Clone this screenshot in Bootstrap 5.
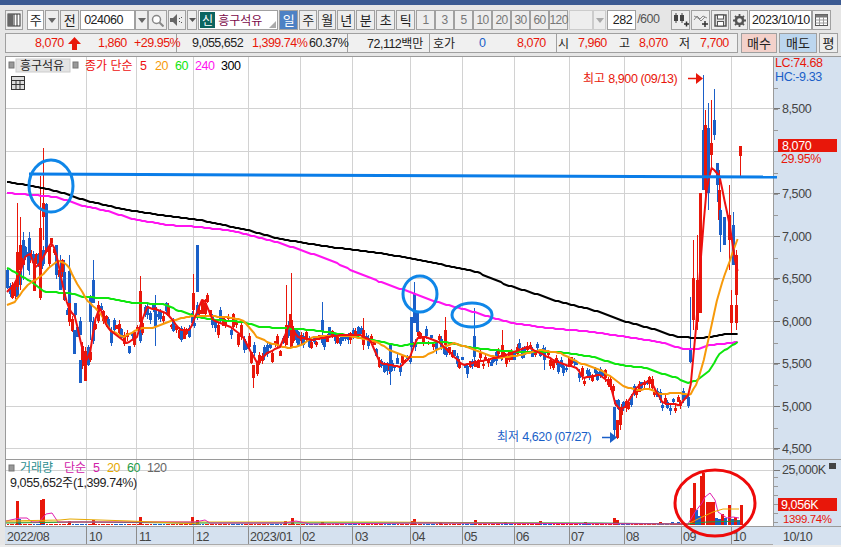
<!DOCTYPE html>
<html lang="ko">
<head>
<meta charset="utf-8">
<title>흥구석유 차트</title>
<link rel="stylesheet" href="https://cdn.jsdelivr.net/npm/bootstrap@5.3.0/dist/css/bootstrap.min.css">
<style>
html,body{height:547px;overflow:hidden;background:#e6e6e6;font-family:"Liberation Sans","Noto Sans CJK KR",sans-serif;color:#222;font-size:12.5px;letter-spacing:-.5px;line-height:18px}
.topbar{height:5px;background:#3b5a92}
.rowa{height:20px;margin:5px 0 0 5px}
.rowb{height:20px;margin:3px 0 3px 5px}
.tb{height:20px;padding:0;border:1px solid #a0a0a0;border-radius:0;background:#ededed;color:#222;font-size:13px;line-height:18px;font-family:"Noto Sans CJK KR",sans-serif;display:flex;align-items:center;justify-content:center;flex:none}
.tb.w14{width:14px}.tb.w18{width:18px}.tb.w19{width:19px}.tb.w36{width:36px}.tb.w38{width:38px}
.tb.wh{background:#fff}
.tb.on{background:#4d81c4;color:#fff}
.tb.off{color:#777;font-family:"Liberation Sans",sans-serif;font-size:12px;letter-spacing:-.6px}
.tb.buy{background:#f3d1ca}.tb.sell{background:#bcd6ee}
.gap1{gap:1px}
.fld{height:20px;border:1px solid #a0a0a0;background:#fff;padding:0 3px;flex:none;overflow:hidden;white-space:nowrap}
.codef{width:55px}.cnt{width:29px;text-align:right}.datef{width:63px;padding:0;text-align:center}
.namef{width:80px;padding:0 0 0 1px;position:relative;font-family:"Noto Sans CJK KR",sans-serif;font-size:12px;letter-spacing:0;color:#7a0a4a}
.shin{display:inline-block;width:15px;height:16px;background:#0c6460;color:#fff;text-align:center;line-height:15px;margin-right:3px}
.corner{position:absolute;right:1px;bottom:1px;width:0;height:0;border-left:7px solid transparent;border-bottom:7px solid #aaa}
.combo{width:24px;height:20px;background:#eee;border:1px solid #ccc;flex:none}
.quote{width:733px;height:20px;border:1px solid #a0a0a0;background:#f0f0f0;flex:none;white-space:nowrap;line-height:18px}
.seg{height:18px;flex:none;border-right:1px solid #a0a0a0;position:relative}
.seg1{width:171px}.seg2{width:171px}.seg3{width:82px}.seg4{width:127px}.seg5{flex:1;border-right:0}
.seg span{position:absolute;top:0}
.red{color:#e8170a}.blu{color:#1a5fc8}
.ko{font-family:"Noto Sans CJK KR",sans-serif;font-size:12px;letter-spacing:0}
.plain{color:#555;flex:none;width:27px;margin-left:1px}
svg text{font-family:"Liberation Sans","Noto Sans CJK KR",sans-serif;font-size:12.5px;letter-spacing:-.4px}
svg .k{font-family:"Noto Sans CJK KR",sans-serif;font-size:12px;letter-spacing:0}
svg .s{font-size:11.5px}
svg{display:block}
</style>
</head>
<body>
<div class="topbar"></div>
<div class="d-flex rowa gap1">
  <button class="btn tb w18"><svg width="14" height="14" viewBox="0 0 14 14"><rect x="1" y="1" width="12" height="12" fill="#fff" stroke="#333"/><rect x="1" y="1" width="5" height="12" fill="#666"/><path d="M7 1v12M10 1v12" stroke="#333"/></svg></button>
  <div class="d-flex ms-1 gap1"><button class="btn tb wh" style="width:17px">주</button><button class="btn tb w14"><svg width="8" height="5"><path d="M0 0h8L4 5z" fill="#666"/></svg></button></div>
  <button class="btn tb w19 ms-0">전</button>
  <div class="d-flex"><div class="fld codef">024060</div><button class="btn tb" style="width:13px;background:#eee"><svg width="8" height="5"><path d="M0 0h8L4 5z" fill="#666"/></svg></button><button class="btn tb w19 ms-0"><svg width="13" height="13" viewBox="0 0 13 13"><circle cx="5.5" cy="5.5" r="4" fill="#fff" stroke="#888" stroke-width="1.5"/><path d="M8.5 8.5l4 4" stroke="#888" stroke-width="2"/></svg></button></div>
  <div class="d-flex gap1"><button class="btn tb w18"><svg width="14" height="12" viewBox="0 0 14 12"><path d="M0 4h3l4-4v12L3 8H0z" fill="#666"/><path d="M9 4h1v1H9zM11 3h1v1h-1zM9 7h1v1H9zM11 8h1v1h-1z" fill="#555"/></svg></button><button class="btn tb" style="width:10px"><svg width="7" height="4"><path d="M0 0h7L3.5 4z" fill="#555"/></svg></button></div>
  <div class="fld namef ms-0"><span class="shin">신</span>흥구석유<span class="corner"></span></div>
  <div class="d-flex gap1 ms-0">
    <button class="btn tb w19 on">일</button><button class="btn tb w18">주</button><button class="btn tb w18">월</button><button class="btn tb w18">년</button>
  </div>
  <div class="d-flex gap1">
    <button class="btn tb w19">분</button><button class="btn tb w19">초</button><button class="btn tb w19">틱</button>
  </div>
  <div class="d-flex">
    <button class="btn tb off w19">1</button><button class="btn tb off w19">3</button><button class="btn tb off w19">5</button><button class="btn tb off w19">10</button><button class="btn tb off w19">20</button><button class="btn tb off w19">30</button><button class="btn tb off w19">60</button><button class="btn tb off w19">120</button>
  </div>
  <div class="d-flex"><div class="combo"></div><button class="btn tb" style="width:13px;border-color:#ccc"><svg width="8" height="5"><path d="M0 0h8L4 5z" fill="#aaa"/></svg></button></div>
  <div class="d-flex ms-0"><div class="fld cnt">282</div><div class="plain">/600</div></div>
  <div class="d-flex gap1 ms-2">
    <button class="btn tb w19"><svg width="16" height="14" viewBox="0 0 16 14"><rect x="1" y="2" width="4" height="6" fill="#444"/><rect x="7" y="2" width="4" height="6" fill="#444"/><path d="M3 0v10M9 0v10" stroke="#444"/><path d="M11 11h5M13.500 8.500v5" stroke="#333" stroke-width="1.500"/></svg></button>
    <button class="btn tb w19"><svg width="16" height="14" viewBox="0 0 16 14"><path d="M1 7l3-4 3 3 3-3 4 2M1 3l4 2 3 3 4-4" fill="none" stroke="#888"/><path d="M9 11h6M12 8v6" stroke="#333" stroke-width="1.500"/></svg></button>
    <button class="btn tb w18"><svg width="13" height="13" viewBox="0 0 13 13"><rect x="1" y="1" width="11" height="11" fill="#ddd" stroke="#555" stroke-width="1.500"/><rect x="3.500" y="1" width="6" height="4" fill="#fff" stroke="#555"/><rect x="3.500" y="7.500" width="6" height="4.500" fill="#fff" stroke="#555"/></svg></button>
    <button class="btn tb w18"><svg width="13" height="13" viewBox="0 0 13 13"><circle cx="6.500" cy="6.500" r="3.600" fill="none" stroke="#555" stroke-width="2.500"/><path d="M6.500 0v2.500M6.500 10.500V13M0 6.500h2.500M10.500 6.500H13M2 2l1.700 1.700M9.300 9.300L11 11M2 11l1.700-1.700M9.300 3.700L11 2" stroke="#555" stroke-width="1.800"/></svg></button>
  </div>
  <div class="d-flex ms-0"><div class="fld datef">2023/10/10</div><button class="btn tb w19"><svg width="13" height="12" viewBox="0 0 13 12"><rect x=".5" y=".5" width="12" height="11" fill="#fff" stroke="#555"/><rect x=".5" y=".5" width="12" height="3" fill="#777"/><path d="M.5 6h12M.5 9h12M4.500 3v8M8.500 3v8" stroke="#999"/></svg></button></div>
</div>
<div class="d-flex rowb">
  <div class="quote d-flex">
    <div class="seg seg1">
      <span class="red" style="left:29px">8,070</span>
      <svg width="13" height="13" viewBox="0 0 13 13" style="position:absolute;left:62px;top:3px"><path d="M6.500 0L13 7H9v6H4V7H0z" fill="#e8170a"/></svg>
      <span class="red" style="left:92px">1,860</span><span class="red" style="left:128px">+29.95%</span>
    </div>
    <div class="seg seg2"><span style="left:15px">9,055,652</span><span class="red" style="left:75px">1,399.74%</span><span style="left:132px">60.37%</span></div>
    <div class="seg seg3"><span style="left:19px">72,112<b class="ko fw-normal">백만</b></span></div>
    <div class="seg seg4"><span class="ko" style="left:3px">호가</span><span class="blu" style="left:49px">0</span><span class="red" style="left:87px">8,070</span></div>
    <div class="seg seg5"><span class="ko" style="left:1px">시</span><span class="red" style="left:21px">7,960</span><span class="ko" style="left:62px">고</span><span class="red" style="left:82px">8,070</span><span class="ko" style="left:122px">저</span><span class="red" style="left:143px">7,700</span></div>
  </div>
  <div class="d-flex" style="gap:2px;margin-left:3px">
    <button class="btn tb w36 buy">매수</button><button class="btn tb w38 sell">매도</button><button class="btn tb w19">평</button>
  </div>
</div>
<svg id="cv" width="841" height="491" viewBox="0 56 841 491" xmlns="http://www.w3.org/2000/svg">
  <g id="base"></g>
  <g id="candles" shape-rendering="crispEdges"></g>
  <g id="lines" fill="none" stroke-linejoin="round"></g>
  <line x1="29" y1="174" x2="777" y2="177" stroke="#0a7de8" stroke-width="3"/>
  <ellipse cx="51" cy="186" rx="22" ry="26" fill="none" stroke="#0f86e8" stroke-width="3"/>
  <ellipse cx="420" cy="294" rx="17" ry="18" fill="none" stroke="#0f86e8" stroke-width="3"/>
  <ellipse cx="472" cy="315" rx="20" ry="12" fill="none" stroke="#0f86e8" stroke-width="3"/>
  <g id="labels"></g>
  <ellipse cx="715" cy="503" rx="40" ry="33" fill="none" stroke="#ee0a0a" stroke-width="3"/>
</svg>
<script src="https://cdn.jsdelivr.net/npm/bootstrap@5.3.0/dist/js/bootstrap.bundle.min.js"></script>
<script>
var R='#e8170a',B='#1a5fc8';
function el(id,s){document.getElementById(id).insertAdjacentHTML('beforeend',s)}
function rect(x,y,w,h,f,extra){return '<rect x="'+x+'" y="'+y+'" width="'+w+'" height="'+h+'" fill="'+f+'" '+(extra||'')+'/>'}
function ln(a,b,c,d,s,w){return '<line x1="'+a+'" y1="'+b+'" x2="'+c+'" y2="'+d+'" stroke="'+s+'" stroke-width="'+(w||1)+'"/>'}
function tx(x,y,t,f,c){return '<text x="'+x+'" y="'+y+'" fill="'+f+'"'+(c?' class="'+c+'"':'')+'>'+t+'</text>'}
var vg=[86.500,136.500,193.500,248.500,300.500,352.500,410.500,462.500,514.500,569.500,624.500,681.500,731.500];
var ps=[108.500,151.500,193.500,236.500,278.500,321.500,363.500,406.500,448.500];
var b='';
b+=rect(0,56,5,491,'#e6e6e6');
b+=rect(5,56,836,491,'#fff');
b+=rect(774,56,67,471,'#d5e1ef');
vg.forEach(function(x){b+=ln(x,57,x,526,'#d2d2d2')});
ps.forEach(function(y){b+=ln(6,y,773,y,'#d2d2d2')});
b+=ln(6,470.500,773,470.500,'#d2d2d2');
b+=ln(5,56.500,841,56.500,'#9a9a9a');
b+=ln(5.500,56,5.500,545,'#9a9a9a');
b+=ln(5,459.500,841,459.500,'#9a9a9a');
b+=ln(773.500,56,773.500,545,'#9a9a9a');
b+=rect(5,527,836,18,'#d5e1ef');
b+=ln(5,526.500,841,526.500,'#9a9a9a');
b+=ln(5,544.500,773,544.500,'#aaa');
b+=rect(0,545,841,2,'#ececec');
vg.forEach(function(x){b+=ln(x,527,x,544,'#8c8c8c')});
for(var y=108.500-21;y<455;y+=21.250){b+=ln(774,Math.round(y)+.5,778,Math.round(y)+.5,'#999')}
ps.forEach(function(y){b+=ln(774,y,780,y,'#777')});
[477,486,495,504,513,522].forEach(function(y){b+=ln(774,y+.5,778,y+.5,'#999')});
b+=ln(774,470.500,780,470.500,'#777');
el('base',b);

function interp(p,x){for(var i=1;i<p.length;i++){if(x<=p[i][0]){var a=p[i-1],c=p[i];return a[1]+(c[1]-a[1])*(x-a[0])/(c[0]-a[0])}}return p[p.length-1][1]}
var m5=[[7,292],[14,285],[20,273],[25,257],[30,253],[35,268],[40,263],[47,250],[52,242],[57,257],[63,287],[68,307],[75,317],[82,347],[85,363],[90,353],[95,320],[100,307],[107,327],[113,333],[127,343],[137,337],[143,317],[147,307],[157,310],[167,313],[180,330],[190,330],[195,317],[203,297],[213,320],[230,327],[243,337],[257,363],[267,353],[280,347],[285,335],[290,323],[297,337],[313,340],[340,335],[360,335],[370,340],[380,363],[400,367],[410,357],[417,338],[427,337],[440,343],[450,353],[463,365],[487,360],[507,355],[527,347],[540,353],[560,363],[577,368],[583,378],[600,375],[610,383],[615,403],[620,410],[625,407],[637,387],[650,380],[657,393],[663,403],[680,405],[690,393],[693,360],[697,317],[700,270],[703,230],[707,185],[712,167],[720,177],[723,193],[730,227],[737,273],[740,263]];
var m20=[[7,305],[15,302],[23,290],[30,283],[40,277],[50,267],[58,261],[68,265],[75,280],[87,300],[100,313],[110,330],[123,337],[133,332],[143,328],[153,328],[167,322],[183,318],[193,316],[207,316],[227,317],[243,320],[257,337],[270,343],[280,346],[290,348],[300,346],[313,337],[330,336],[347,336],[360,338],[377,342],[390,350],[407,357],[423,357],[437,350],[453,343],[470,348],[487,355],[500,358],[520,355],[540,350],[560,353],[580,363],[600,370],[613,378],[623,386],[637,390],[650,389],[660,394],[680,393],[690,395],[697,383],[703,363],[710,333],[717,300],[723,280],[730,260],[740,232]];
var m60=[[7,268],[20,275],[33,283],[45,292],[70,293],[83,297],[107,298],[133,303],[163,304],[177,310],[197,317],[217,320],[243,322],[260,327],[280,328],[313,330],[347,335],[373,340],[400,346],[420,343],[447,342],[467,347],[493,350],[520,352],[560,352],[593,357],[620,365],[647,368],[660,373],[677,378],[688,383],[698,380],[710,370],[720,353],[733,345],[740,340]];
var m240=[[7,193],[33,195],[57,197],[80,205],[107,211],[133,219],[167,225],[200,227],[233,231],[260,238],[280,243],[330,260],[353,271],[380,282],[413,293],[437,302],[467,310],[493,318],[513,323],[540,327],[560,329],[593,332],[627,337],[660,342],[683,349],[697,349],[710,345],[740,342]];
var m300=[[7,182],[33,186],[60,192],[87,201],[127,210],[167,216],[200,220],[247,230],[280,239],[330,247],[380,253],[420,260],[477,272],[507,285],[533,293],[560,302],[593,310],[627,322],[657,330],[677,337],[703,338],[727,334],[740,334]];
var seed=7;function rnd(){seed=(seed*16807)%2147483647;return seed/2147483647}
function candle(x,hi,lo,t,bt,c){return rect(Math.round(x),hi,1,lo-hi,c)+rect(Math.round(x)-1,t,3,bt-t,c)}
var cs='';
for(var x=7;x<689;x+=2.6){
  var mid=interp(m5,x)+(rnd()-.5)*(x<80?26:x<300?18:12);
  var h=2+rnd()*(x<100?18:x<300?11:7);
  var t=Math.round(mid-h/2),bt=Math.round(mid+h/2);
  var hi=t-Math.round(rnd()*4),lo=bt+Math.round(rnd()*4);
  cs+=candle(x,hi,lo,t,bt,rnd()<.5?R:B);
}
var big=[[17,203,290,252,287,R],[20,217,290,245,270,R],[23,232,280,240,258,B],[29,232,275,238,260,B],[34,258,285,261,291,R],[40,176,300,228,298,R],[43,148,240,203,217,R],[46,203,250,204,247,B],[56,245,275,245,262,B],[60,255,290,272,290,B],[64,260,300,272,290,B],[69,255,303,271,303,B],[74,330,354,330,354,B],[80,360,383,360,383,B],[85,357,381,362,381,R],[93,260,303,280,303,B],[90,295,340,297,322,B],[140,276,327,291,322,R],[155,295,346,310,326,B],[193,274,317,293,310,R],[197,245,292,245,292,B],[253,367,388,365,378,R],[286,285,325,325,345,R],[291,273,347,320,347,R],[322,302,340,320,332,B],[363,318,350,330,345,R],[390,350,385,345,372,B],[411,317,360,317,347,B],[414,282,323,293,323,B],[417,312,332,312,332,B],[445,317,350,330,345,R],[474,308,363,336,357,B],[502,330,360,345,358,R],[544,352,370,352,360,B],[614,407,438,407,430,B],[617,420,439,420,438,R],[620,410,430,410,425,R],[690,297,363,348,362,B],[693,240,330,278,320,R],[697,235,330,280,322,R],[700,193,313,193,313,R],[703,75,190,130,190,B],[705,110,205,125,190,R],[708,103,210,128,193,B],[711,100,170,143,155,R],[714,89,140,120,135,B],[717,163,202,163,185,B],[719,170,230,190,220,R],[720,208,252,210,235,B],[724,217,245,217,245,B],[729,185,270,215,240,R],[733,212,265,225,265,B],[736,250,300,255,295,R],[731,290,335,305,323,R],[736,295,330,305,323,R],[740,146,177,146,156,R]];
big.forEach(function(a){cs+=candle(a[0],a[1],Math.max(a[1]+1,a[2]),Math.min(a[3],a[4]),Math.max(a[3],a[4]),a[5])});
el('candles',cs);

function poly(p,c,w){var s=[];for(var x=p[0][0];x<=p[p.length-1][0];x+=2.6){s.push(x.toFixed(1)+','+Math.round(interp(p,x)))}return '<polyline points="'+s.join(' ')+'" stroke="'+c+'" stroke-width="'+w+'"/>'}
var l=poly(m300,'#000',2)+poly(m240,'#ff14f0',2)+poly(m60,'#0ee60e',2)+poly(m20,'#f79a0a',2)+poly(m5,'#ee1010',2);
var vb='';
var bars=[[17,501],[41,500],[43,499],[69,521],[93,520],[140,517],[192,517],[197,520],[285,521],[292,518],[322,522],[412,521],[414,519],[440,522],[475,520],[505,522],[540,521],[585,522],[614,518],[617,520],[660,522],[691,508],[694,483],[701,476],[703,473],[707,502],[710,502],[713,502],[722,514],[729,505],[735,517],[741,505]];
bars.forEach(function(a){vb+=rect(a[0]-1,a[1],3,525-a[1],R)});
[[19,519],[696,510],[699,516],[716,518],[719,519],[725,518],[732,519],[738,520],[672,522],[678,522]].forEach(function(a){vb+=rect(a[0]-1,a[1],3,525-a[1],B)});
for(var i=7;i<690;i+=2.6){vb+=rect(Math.round(i),524,2,1,(Math.floor(i*7)%3==0)?B:R)}
l+=vb;
function vline(pts,c){return '<polyline points="'+pts+'" stroke="'+c+'" stroke-width="1"/>'}
l+=vline('6,522 380,522 690,524','#e6b800');
l+=vline('6,523 80,522 185,523 395,523 600,523 688,524','#1d9b46');
l+=vline('6,521 20,518 27,518 32,522 39,522 46,514 52,513 58,522 195,522 205,520 210,523 285,523 296,521 310,524 420,523 690,524','#e020b0');
l+=vline('6,521 60,520 70,519 130,521 200,524','#e6a800');
l+=vline('688,524 695,512 702,503 705,497 710,493 715,500 718,512 727,518 733,517 739,518','#e020b0');
l+=vline('688,524 700,518 713,512 723,509 739,509','#f0a800');
l+=vline('688,524 707,522 740,521','#1d9b46');
el('lines',l);

var t='';
t+=rect(9,62,5,6,'#999','stroke="#777"');
t+=rect(16,59,54,13,'#e4e4e4','stroke="#ccc"');
t+=tx(20,70,'흥구석유','#222','k');
t+=rect(73,62,5,6,'#999','stroke="#777"');
t+=tx(85,70,'종가 단순','#ee1010','k');
t+=tx(140,70,'5','#ee1010')+tx(155,70,'20','#f79a0a')+tx(175,70,'60','#0ee60e')+tx(195,70,'240','#ff14f0')+tx(221,70,'300','#000');
t+='<rect x="11.500" y="76.500" width="13" height="13" fill="#ddd" stroke="#333"/><path d="M11.500 80.500h13M11.500 84.500h13M16 80v9M20 80v9" stroke="#333"/>';
t+=tx(775,67,'LC:74.68',R)+tx(775,81,'HC:-9.33',B);
[['8,500',108],['7,500',193],['7,000',236],['6,500',278],['6,000',321],['5,500',363],['5,000',406],['4,500',448]].forEach(function(a){t+=tx(782,a[1]+5,a[0],'#444')});
t+=rect(778,139,59,13,R)+tx(782,150,'8,070','#fff')+tx(781,163,'29.95%',R);
t+='<text x="583" y="83" fill="'+R+'"><tspan class="k">최고</tspan> 8,900 (09/13)</text>';
t+=ln(688,78.500,698,78.500,R,1.500)+'<path d="M696 73l7 5.500-7 5.500z" fill="'+R+'"/>';
t+='<text x="497" y="441" fill="'+B+'"><tspan class="k">최저</tspan> 4,620 (07/27)</text>';
t+=ln(602,437.500,612,437.500,B,1.500)+'<path d="M610 432l7 5.500-7 5.500z" fill="'+B+'"/>';
t+=rect(9,465,5,6,'#999','stroke="#777"');
t+=tx(20,472,'거래량','#2b8f8f','k')+tx(64,472,'단순','#d020a8','k');
t+=tx(93,472,'5','#d020a8')+tx(107,472,'20','#e6a800')+tx(127,472,'60','#1d9b46')+tx(147,472,'120','#666');
t+='<text x="10" y="487" fill="#222">9,055,652<tspan class="k">주</tspan>(1,399.74%)</text>';
t+=tx(782,474,'25,000K','#444');
t+=rect(778,498,59,13,R)+tx(781,509,'9,056K','#fff')+tx(783,523,'1399.74%',R,'s');
t+=rect(829,463,7,6,'#444');
[['2022/08',7],['10',89],['11',139],['12',196],['2023/01',250],['02',302],['03',355],['04',412],['05',464],['06',516],['07',571],['08',626],['09',683],['10',733],['10/10',783]].forEach(function(a){t+=tx(a[1],541,a[0],'#444')});
el('labels',t);
</script>
</body>
</html>
